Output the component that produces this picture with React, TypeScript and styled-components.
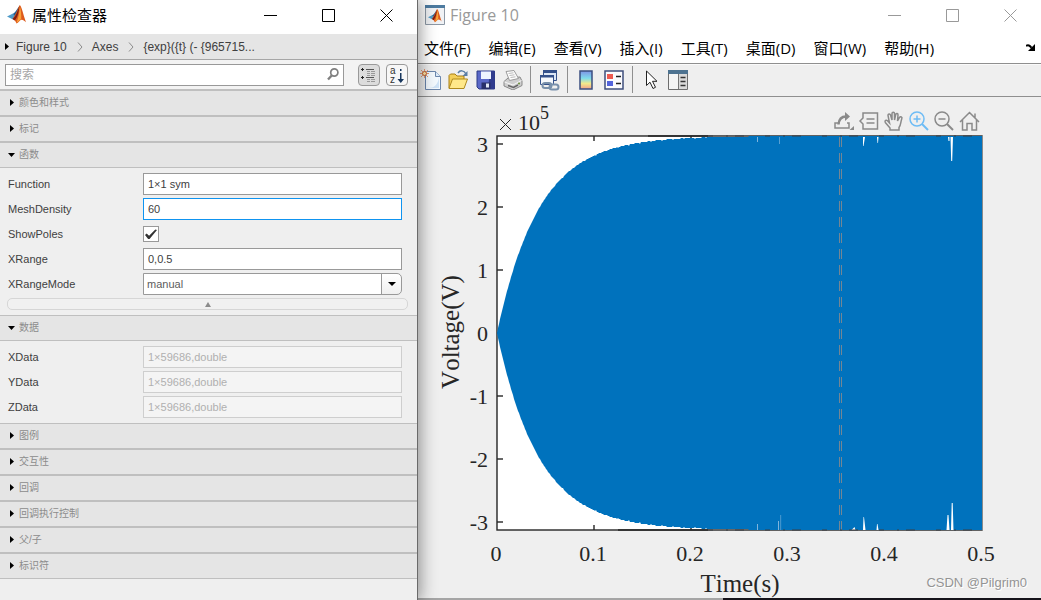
import React from 'react';
import styled, { createGlobalStyle } from 'styled-components';

const GlobalStyle = createGlobalStyle`
  * { box-sizing: border-box; }
  body { margin: 0; background: #efefef; }
  button, input, select { font: inherit; color: inherit; }
`;

const sans = `"Liberation Sans", "Noto Sans CJK SC", sans-serif`;
const uiFont = `"Open Sans", "Noto Sans CJK SC", sans-serif`;

const Desktop = styled.div`
  display: flex;
  min-height: 100vh;
`;

const Inspector = styled.aside`
  position: relative;
  z-index: 1;
  flex: 0 0 418px;
  background: #efefef;
  border-right: 1px solid #6a6a6a;
  box-shadow: 0 0 16px 2px rgba(0, 0, 0, 0.42);
  font-family: ${sans};
  font-size: 11px;
  color: #404040;
`;

const FigureWindow = styled.main`
  flex: 1;
  min-width: 0;
  display: flex;
  flex-direction: column;
  background: #efefef;
  font-family: ${uiFont};
`;

const TitleBar = styled.header<{ $inactive?: boolean }>`
  display: flex;
  align-items: center;
  height: 34px;
  padding: 0 2px 4px 7px;
  background: #fff;
  color: ${(p) => (p.$inactive ? '#999' : '#000')};
  font-family: ${uiFont};
`;

const WindowTitle = styled.h1<{ $size: number }>`
  flex: 1;
  margin: 0 0 0 5px;
  font-size: ${(p) => p.$size}px;
  line-height: 22px;
  font-weight: 400;
`;

const PlainButton = styled.button`
  display: flex;
  align-items: center;
  justify-content: center;
  padding: 0;
  border: 0;
  background: none;
`;

const WindowButton = styled(PlainButton)`
  width: 58px;
  height: 30px;
`;

const Breadcrumb = styled.nav`
  display: flex;
  align-items: center;
  height: 26px;
  padding-left: 5px;
  background: #e5e5e5;
  border-bottom: 1px solid #a6a6a6;
  font-size: 12px;
  line-height: 16px;
`;

const Crumb = styled.a`
  color: #404040;
  text-decoration: none;
  white-space: pre;
`;

const SearchBar = styled.div`
  display: flex;
  align-items: center;
  height: 31px;
  padding: 0 9px 0 5px;
  border-bottom: 2px solid #bfbfbf;
  background: #f3f3f3;
`;

const SearchBox = styled.label`
  display: flex;
  flex: 1;
  align-items: center;
  height: 22px;
  margin-right: 14px;
  padding: 0 4px;
  background: #fff;
  border: 1px solid #999;
`;

const SearchInput = styled.input`
  flex: 1;
  min-width: 0;
  padding: 0;
  border: 0;
  outline: 0;
  background: none;
  font-size: 12px;
  line-height: 16px;
  &::placeholder { color: #a6a6a6; opacity: 1; }
`;

const ModeButton = styled(PlainButton)<{ $pressed?: boolean }>`
  width: 22px;
  height: 22px;
  border: 1px solid #999;
  border-radius: 4px;
  background: ${(p) => (p.$pressed ? '#dcdcdc' : '#f7f7f7')};
  & + & { margin-left: 6px; }
`;

const SectionHeader = styled.button<{ $last?: boolean }>`
  display: flex;
  align-items: center;
  width: 100%;
  height: ${(p) => (p.$last ? 25 : 26)}px;
  padding: 0 0 1px 8px;
  border: 0;
  border-bottom: ${(p) => (p.$last ? 1 : 2)}px solid #bfbfbf;
  background: #e5e5e5;
  color: #8c8c8c;
  font-size: 10px;
  line-height: 14px;
  text-align: left;
`;

const Caret = styled.svg`
  flex: none;
  width: 7px;
  height: 7px;
  margin-right: 4px;
  fill: #000;
`;

const SectionBody = styled.div`
  display: flex;
  flex-direction: column;
  gap: 3px;
  padding: 5px 15px 5px 8px;
  border-bottom: 1px solid #bfbfbf;
`;

const PropertyRow = styled.div`
  display: flex;
  align-items: center;
  height: 22px;
`;

const PropertyLabel = styled.label`
  flex: 0 0 135px;
`;

const TextField = styled.input<{ $focus?: boolean }>`
  flex: 1;
  min-width: 0;
  height: 22px;
  padding: 0 4px;
  border: 1px solid ${(p) => (p.$focus ? '#0f94f0' : '#999')};
  border-radius: 0;
  background: #fff;
  &:disabled { border-color: #cecece; background: #f4f4f4; color: #b0b0b0; }
`;

const CheckField = styled.input`
  appearance: none;
  display: grid;
  place-items: center;
  width: 16px;
  height: 16px;
  margin: 0;
  border: 1px solid #999;
  background: #fff;
  &:checked::before {
    content: '';
    width: 12px;
    height: 10px;
    background: #333;
    clip-path: polygon(0 60%, 14% 46%, 34% 68%, 86% 4%, 100% 10%, 38% 100%, 26% 100%);
  }
`;

const SelectBox = styled.div`
  display: flex;
  flex: 1;
  height: 22px;
  border: 1px solid #999;
  border-radius: 0 5px 5px 0;
  background: linear-gradient(#fff, #f0f0f0);
  overflow: hidden;
`;

const SelectField = styled.select`
  appearance: none;
  flex: 1;
  padding: 0 3px;
  border: 0;
  border-right: 1px solid #999;
  border-radius: 0;
  background: #fff;
  color: #5c5c5c;
`;

const SelectArrow = styled.span`
  display: flex;
  align-items: center;
  justify-content: center;
  width: 19px;
`;

const CollapseBar = styled(PlainButton)`
  height: 12px;
  margin: 0 -6px 0 -1px;
  border: 1px solid #d6d6d6;
  border-radius: 5px;
  background: #f1f1f1;
`;

const MenuBar = styled.nav`
  display: flex;
  align-items: center;
  gap: 18px;
  height: 30px;
  padding: 0 5px 2px 6px;
  border-bottom: 1px solid #8f8f8f;
  background: #fff;
`;

const MenuItem = styled(PlainButton)`
  color: #000;
  font-size: 15px;
  line-height: 20px;
  white-space: nowrap;
`;

const DockButton = styled(PlainButton)`
  margin-left: auto;
`;

const ToolBar = styled.div`
  display: flex;
  align-items: center;
  height: 33px;
  padding: 0 0 2px;
  border-top: 1px solid #fafafa;
  border-bottom: 1px solid #8f8f8f;
`;

const ToolButton = styled(PlainButton)<{ $narrow?: boolean }>`
  width: ${(p) => (p.$narrow ? 26 : 28)}px;
  height: 24px;
  flex: none;
`;

const Divider = styled.span`
  width: 1px;
  height: 27px;
  margin: 0 4px;
  background: #8f8f8f;
`;

const Canvas = styled.section`
  position: relative;
  display: flex;
  flex: 1;
`;

const Chart = styled.svg`
  width: 100%;
  height: auto;
  font-family: "Liberation Serif", serif;
  font-size: 22px;
  font-kerning: none;
  fill: #262626;
`;

const AxesToolbar = styled.div`
  position: absolute;
  top: 13px;
  right: 61px;
  display: flex;
  gap: 3px;
`;

const AxesButton = styled(PlainButton)<{ $active?: boolean }>`
  width: 22px;
  height: 22px;
  color: ${(p) => (p.$active ? '#6ebcf5' : '#8a8a8a')};
`;

const Watermark = styled.p`
  position: absolute;
  right: 14px;
  bottom: 5px;
  margin: 0;
  color: #949494;
  font-family: "Liberation Sans", sans-serif;
  font-size: 13px;
  line-height: 20px;
  text-shadow: 1px 1px 0 #fff;
`;

const BottomEdge = styled.footer`
  height: 2px;
  background: linear-gradient(90deg, #a5a5a5 0 49%, #15131a 49% 100%);
`;

const WindowControls = () => (
  <>
    <WindowButton aria-label="Minimize">
      <svg width="13" height="13" stroke="currentColor"><path d="M0 6.5h13" /></svg>
    </WindowButton>
    <WindowButton aria-label="Maximize">
      <svg width="13" height="13" stroke="currentColor" fill="none"><path d="M.5.5h12v12H.5z" /></svg>
    </WindowButton>
    <WindowButton aria-label="Close">
      <svg width="13" height="13" stroke="currentColor"><path d="M.5.5l12 12M12.5.5l-12 12" /></svg>
    </WindowButton>
  </>
);

const MatlabShape = () => (
  <>
    <path d="M0 11.5 5.5 8.8 8 11.2 5.5 14.2z" fill="#4f9bc9" />
    <path d="M5.5 8.8C8 8.2 9.4 5 12.4 1L10 11.8 5.5 14.2 8 11.2z" fill="#1f5f96" />
    <path d="M12.4.5c-1.6 3-2.6 7.2-6.9 13.5 1.5.4 3 1.7 4 4.5 1.9-.5 3.4-4 5.2-3.8 1.6.2 2.5 1 4.3 2.5C17 12 15 3.4 13.6 1 13.2.2 12.8.2 12.4.5z" fill="#dd5a1c" />
    <path d="M12.4.5C11.5 4.5 9 11.5 5.5 14l2.2 1.5C11 12 12 6 12.4.5z" fill="#7e1d12" />
    <path d="M12.9 1.5c-.5 6-1.5 11-3.4 16.500 1.9-.8 3.100-3.500 4.700-3.700C14.5 10 14 5 12.9 1.5z" fill="#f9a13a" />
  </>
);

const RightCaret = () => (
  <Caret viewBox="0 0 7 7"><path d="M2 0v7l4-3.5z" /></Caret>
);
const DownCaret = () => (
  <Caret viewBox="0 0 7 7"><path d="M0 2h7L3.5 6z" /></Caret>
);

const CrumbArrow = styled.svg`
  width: 6px;
  height: 10px;
  margin: 0 9px 0 10px;
  fill: none;
  stroke: #8c8c8c;
`;

const sectionsBefore = ['颜色和样式', '标记'];
const sectionsAfter = ['图例', '交互性', '回调', '回调执行控制', '父/子', '标识符'];
const dataRows = ['XData', 'YData', 'ZData'];
const menus = ['文件(F)', '编辑(E)', '查看(V)', '插入(I)', '工具(T)', '桌面(D)', '窗口(W)', '帮助(H)'];

// Plot geometry in chart units.
const AX = { left: 79, right: 564, top: 39, bottom: 433, zero: 236 };
const UNIT = 63;
const TAU = 42;

function envelope(): string {
  const span = AX.right - AX.left;
  const upper: string[] = [];
  const lower: string[] = [];
  for (let i = 0; i <= span; i += 1) {
    const ripple = i > 60 && i < 220 && (i * 7) % 11 === 0 ? 1 : 0;
    const h = Math.round(197 * (1 - Math.exp(-i / TAU))) - ripple;
    upper.push(`${AX.left + i} ${AX.zero - h}`);
    lower.unshift(`${AX.left + i} ${AX.zero + h}`);
  }
  return `M${upper.join('L')}L${lower.join('L')}z`;
}

const Plot = () => (
  <Chart viewBox="0 0 623 501" role="img" aria-label="Voltage over time">
    <rect x={AX.left} y={AX.top} width={AX.right - AX.left} height={AX.bottom - AX.top} fill="#fff" />
    <g stroke="#262626" strokeWidth="1.4" fill="none">
      <rect x={AX.left} y={AX.top} width={AX.right - AX.left} height={AX.bottom - AX.top} />
      {[3, 2, 1, 0, -1, -2, -3].map((v) => (
        <path key={v} d={`M${AX.left} ${AX.zero - v * UNIT}h6`} />
      ))}
      {[1, 2].map((v) => (
        <path key={v} d={`M${AX.left + v * 97} ${AX.top}v5M${AX.left + v * 97} ${AX.bottom}v-5`} />
      ))}
    </g>
    <path d={envelope()} fill="#0072bd" />
    <g fill="#fff">
      <path d="M445 40h2l-1.5 9h-.5zM459 40h1.5l-.5 6h-.5zM530 40h1.5v4h-1zM532.500 40h2.500l-.8 24h-1z" />
      <path d="M445 433h2.5l-1.5-13h-.5zM458.5 433h2l-1-6h-.5zM433.5 433h4l-1-3zM528.5 433h3l-1-15h-1zM533 433h2.5l-.8-27h-1z" />
    </g>
    <g fill="#7fb4dc">
      <path d="M339 40h1v5h-1zM361 40h.7v7h-.7zM339 427h1v6h-1zM360 424h1v9h-1zM362.5 418h.6v15h-.6z" />
    </g>
    <path d="M421.5 39V433M423.5 39V433" stroke="#748694" strokeWidth="1" strokeDasharray="10 6" strokeDashoffset="-1" />
    <path d="M200 433H290M230 39H290" stroke="#262626" strokeWidth="1.4" />
    <path d="M290 433H564M290 39H564" stroke="#3b3f44" strokeWidth="1" strokeDasharray="5 13 2 7 9 21" />
    <path d="M564.5 39V433" stroke="#8a8a8a" strokeWidth="1" />

    <path d="M82 22l11 11M93 22l-11 11" stroke="#262626" />
    <text x="100" y="33">10</text>
    <text x="122" y="22" fontSize="18">5</text>
    <g textAnchor="end">
      {[3, 2, 1, 0, -1, -2, -3].map((v) => (
        <text key={v} x="70" y={AX.zero - v * UNIT + 8}>{v}</text>
      ))}
    </g>
    <g textAnchor="middle">
      {[0, 0.1, 0.2, 0.3, 0.4, 0.5].map((v, i) => (
        <text key={v} x={AX.left + i * 97 - 1} y="464">{v}</text>
      ))}
      <text x="322" y="495" fontSize="25">Time(s)</text>
      <text transform="translate(41 235) rotate(-90)" fontSize="25">Voltage(V)</text>
    </g>
  </Chart>
);

const ToolIcons = () => (
  <ToolBar>
    <ToolButton $narrow aria-label="New figure">
      <svg width="22" height="22" viewBox="0 0 22 22">
        <path d="M5.5 2.5h10l5 5v13h-15z" fill="#f4faff" stroke="#6c87ad" />
        <path d="M19 8v11H8c6 0 10-3 11-11z" fill="#cfe3f7" />
        <path d="M15.5 2.5v5h5" fill="#dcebfa" stroke="#6c87ad" />
        <path d="M4.5 0v9M0 4.5h9M1 1l7 7M8 1L1 8" stroke="#e39a78" />
        <circle cx="4.5" cy="4.5" r="2" fill="#ffe7a8" stroke="#c85f2e" />
      </svg>
    </ToolButton>
    <ToolButton aria-label="Open">
      <svg width="22" height="22" viewBox="0 0 22 22">
        <path d="M2 19V6.5L3.5 5H8l2 2h7v3" fill="#f3cf5a" stroke="#a97f14" />
        <path d="M2 19.5 5.5 10h15L17 19.5z" fill="#ffe88a" stroke="#b08a1d" />
        <path d="M11 4c2-3 6-3 8 1" fill="none" stroke="#5a7ea5" strokeWidth="1.5" />
        <path d="M20.5 2v5h-5z" fill="#5a7ea5" />
      </svg>
    </ToolButton>
    <ToolButton aria-label="Save">
      <svg width="20" height="20" viewBox="0 0 20 20">
        <path d="M1 1h17.5v18H3l-2-2z" fill="#5a68c8" stroke="#2d3a86" />
        <path d="M14 1h4.5v18H12z" fill="#303c8e" />
        <path d="M5 1.5h10V9H5z" fill="#eef4ff" />
        <path d="M5.5 12.5h9V19h-9z" fill="#28306b" />
        <path d="M10 13.5h3v4h-3z" fill="#dfe6f6" />
      </svg>
    </ToolButton>
    <ToolButton $narrow aria-label="Print">
      <svg width="20" height="20" viewBox="0 0 20 20">
        <path d="M1 11.5 5 8l12-1 2 4v4.500l-9 4.500-9-4z" fill="#cfcfcf" stroke="#8a8a8a" />
        <path d="M3 1.500 11 .5 15.500 8.500 6.500 10.500z" fill="#fdfdfd" stroke="#9a9a9a" />
        <path d="M1.500 12l8.500 3 8.500-4.500" fill="none" stroke="#f6f6f6" />
        <path d="M5 15.500l5.500 2 4.500-2.500" stroke="#666" fill="none" strokeWidth="1.5" />
        <path d="M5.5 3.500l5-.7M6.500 5.500l5-.7M7.500 7.500l5-.7" stroke="#bbb" />
        <circle cx="16" cy="13.5" r="1" fill="#6a8f3a" />
      </svg>
    </ToolButton>
    <Divider />
    <ToolButton aria-label="Link plot">
      <svg width="22" height="22" viewBox="0 0 22 22">
        <path d="M5.5 1.5h13v10h-13z" fill="#dbe6f5" stroke="#33508a" /><path d="M5 1h14v3H5z" fill="#33508a" />
        <path d="M2.5 6.5h13v9h-13z" fill="#f5f8fc" stroke="#33508a" /><path d="M2 6h14v2.5H2z" fill="#33508a" />
        <rect x="4.5" y="14" width="9" height="5" rx="2.5" fill="none" stroke="#7890ab" strokeWidth="2" />
        <rect x="11.5" y="15.5" width="9" height="5" rx="2.5" fill="none" stroke="#7890ab" strokeWidth="2" />
      </svg>
    </ToolButton>
    <Divider />
    <ToolButton aria-label="Insert colorbar">
      <svg width="14" height="20" viewBox="0 0 14 20">
        <defs>
          <linearGradient id="spectrum" x1="0" y1="0" x2="0" y2="1">
            <stop offset="0" stopColor="#7f93e6" /><stop offset=".4" stopColor="#7edcec" />
            <stop offset=".7" stopColor="#f4e98a" /><stop offset="1" stopColor="#f2a08a" />
          </linearGradient>
        </defs>
        <path d="M1 1h12v18H1z" fill="url(#spectrum)" stroke="#3b4f80" strokeWidth="1.5" />
      </svg>
    </ToolButton>
    <ToolButton aria-label="Insert legend">
      <svg width="20" height="20" viewBox="0 0 20 20">
        <path d="M1 1h18v18H1z" fill="#fbfbfd" stroke="#3f4f7c" strokeWidth="1.5" />
        <path d="M3 4h6v5H3z" fill="#ee5a50" /><path d="M3 11h6v5H3z" fill="#5263dc" />
        <path d="M12 6.5h5M12 13.5h5" stroke="#222" strokeWidth="1.5" />
      </svg>
    </ToolButton>
    <Divider />
    <ToolButton aria-label="Edit plot">
      <svg width="14" height="20" viewBox="0 0 14 20">
        <path d="M2.5 1v14.5l3.5-3.300 3 6.300 2.500-1.200-3-6h4.500z" fill="#fff" stroke="#222" />
      </svg>
    </ToolButton>
    <ToolButton $narrow aria-label="Property inspector">
      <svg width="20" height="20" viewBox="0 0 20 20">
        <path d="M.5.5h19v19H.5z" fill="#f4f4f4" stroke="#6d6d6d" />
        <path d="M0 0h20v4H0z" fill="#4d7290" /><path d="M11 4h8v15h-8z" fill="#d9d9d9" />
        <path d="M10.5 4v15" stroke="#777" />
        <path d="M12.5 7.5h5M12.5 11.5h5M12.5 15.5h5" stroke="#333" strokeWidth="1.3" />
      </svg>
    </ToolButton>
  </ToolBar>
);

const AxesTools = () => {
  const line = { width: 22, height: 22, viewBox: '0 0 22 22', fill: 'none', stroke: 'currentColor', strokeWidth: 1.5 };
  return (
    <AxesToolbar>
      <AxesButton aria-label="Export">
        <svg {...line}>
          <path d="M5 13H2v5h14v-5h-2" />
          <path d="M5.5 14.500C6 9 9 6.500 13 6.500" strokeWidth="2.5" />
          <path d="M12 2l5 4.500-5 4.500zM21 16v4h-4.500z" fill="currentColor" stroke="none" />
        </svg>
      </AxesButton>
      <AxesButton aria-label="Data tips">
        <svg {...line}><path d="M5 3h14.500v16H5v-5l-3-3 3-3zM8.500 9h8M8.500 13h8" /></svg>
      </AxesButton>
      <AxesButton aria-label="Pan">
        <svg {...line}>
          <path d="M7 20v-2L2.300 12.500c-1-1.800 1-3 2.200-1.700L6.500 13 5 5.500c-.2-1.800 2-2.200 2.500-.5l1.500 5V3.500c0-1.800 2.500-1.800 2.500 0V10l1.200-5.500c.4-1.700 2.600-1.200 2.300.5L14.500 11l2-3.500c1-1.500 3-.5 2.300 1.200C17.500 12 18 15 16 17.500V20z" />
        </svg>
      </AxesButton>
      <AxesButton $active aria-label="Zoom in">
        <svg {...line}><circle cx="9" cy="9" r="7" /><path d="M14 14l6 6" strokeWidth="2" /><path d="M5.5 9h7M9 5.500v7" /></svg>
      </AxesButton>
      <AxesButton aria-label="Zoom out">
        <svg {...line}><circle cx="9" cy="9" r="7" /><path d="M14 14l6 6" strokeWidth="2" /><path d="M5.5 9h7" /></svg>
      </AxesButton>
      <AxesButton aria-label="Restore view">
        <svg {...line}><path d="M2 12l9.500-9.500L21 12M4.500 10v10h4.500v-6.500h5V20h4.500V10M17 3.500v4" /></svg>
      </AxesButton>
    </AxesToolbar>
  );
};

const SortGlyph = styled.svg`
  overflow: visible;
  font-family: "Liberation Sans", sans-serif;
  font-size: 10px;
  fill: #333;
`;

export default function App() {
  return (
    <>
      <GlobalStyle />
      <Desktop>
        <Inspector>
          <TitleBar>
            <svg width="20" height="20" viewBox="0 0 20 20"><MatlabShape /></svg>
            <WindowTitle $size={15}>属性检查器</WindowTitle>
            <WindowControls />
          </TitleBar>
          <Breadcrumb>
            <Caret viewBox="0 0 7 7"><path d="M0 0v7l4-3.5z" /></Caret>
            <Crumb href="#figure">Figure 10</Crumb>
            <CrumbArrow viewBox="0 0 6 10"><path d="M1 .5l4 4.500-4 4.500" /></CrumbArrow>
            <Crumb href="#axes">Axes</Crumb>
            <CrumbArrow viewBox="0 0 6 10"><path d="M1 .5l4 4.500-4 4.500" /></CrumbArrow>
            <Crumb href="#line">{'{exp}({t} (- {965715...'}</Crumb>
          </Breadcrumb>
          <SearchBar>
            <SearchBox>
              <SearchInput placeholder="搜索" aria-label="搜索" />
              <svg width="12" height="13" viewBox="0 0 12 13" fill="none" stroke="#808080">
                <circle cx="7.3" cy="4.5" r="3.6" strokeWidth="1.7" />
                <path d="M4.7 7.5L1 11.500" strokeWidth="2.4" />
              </svg>
            </SearchBox>
            <ModeButton $pressed aria-label="Group properties">
              <svg width="16" height="16" viewBox="0 0 16 16" stroke="#555">
                <path d="M0 2.500h3M1.500 1v3M0 10.500h3M1.500 9v3" stroke="#222" />
                <path d="M5 2.500h8M5 10.500h8" />
                <path d="M6 4.500h3M10 4.500h4M6 6.500h3M10 6.500h4M6 8.500h3M10 8.500h4M6 12.500h3M10 12.500h4M6 14.500h3M10 14.500h4" stroke="#999" />
              </svg>
            </ModeButton>
            <ModeButton aria-label="Sort alphabetically">
              <SortGlyph width="18" height="20" viewBox="0 0 18 20">
                <text x="2" y="9">a</text>
                <text x="2" y="18">z</text>
                <path d="M12 4h1.5v2H12zM12 8h1.5v6h2.500l-3.200 4-3.300-4H12z" fill="#17365d" />
              </SortGlyph>
            </ModeButton>
          </SearchBar>

          {sectionsBefore.map((name) => (
            <SectionHeader key={name}><RightCaret />{name}</SectionHeader>
          ))}

          <SectionHeader $last><DownCaret />函数</SectionHeader>
          <SectionBody>
            <PropertyRow>
              <PropertyLabel htmlFor="fn">Function</PropertyLabel>
              <TextField id="fn" defaultValue="1×1 sym" />
            </PropertyRow>
            <PropertyRow>
              <PropertyLabel htmlFor="mesh">MeshDensity</PropertyLabel>
              <TextField id="mesh" $focus defaultValue="60" />
            </PropertyRow>
            <PropertyRow>
              <PropertyLabel htmlFor="poles">ShowPoles</PropertyLabel>
              <CheckField id="poles" type="checkbox" defaultChecked />
            </PropertyRow>
            <PropertyRow>
              <PropertyLabel htmlFor="range">XRange</PropertyLabel>
              <TextField id="range" defaultValue="0,0.5" />
            </PropertyRow>
            <PropertyRow>
              <PropertyLabel htmlFor="mode">XRangeMode</PropertyLabel>
              <SelectBox>
                <SelectField id="mode" defaultValue="manual">
                  <option>manual</option>
                  <option>auto</option>
                </SelectField>
                <SelectArrow><svg width="8" height="4"><path d="M0 0h8L4 4z" /></svg></SelectArrow>
              </SelectBox>
            </PropertyRow>
            <CollapseBar aria-label="Collapse">
              <svg width="6" height="5" fill="#8c8c8c"><path d="M0 5h6L3 0z" /></svg>
            </CollapseBar>
          </SectionBody>

          <SectionHeader $last><DownCaret />数据</SectionHeader>
          <SectionBody>
            {dataRows.map((name) => (
              <PropertyRow key={name}>
                <PropertyLabel htmlFor={name}>{name}</PropertyLabel>
                <TextField id={name} disabled defaultValue="1×59686,double" />
              </PropertyRow>
            ))}
          </SectionBody>

          {sectionsAfter.map((name, i) => (
            <SectionHeader key={name} $last={i === sectionsAfter.length - 1}><RightCaret />{name}</SectionHeader>
          ))}
        </Inspector>

        <FigureWindow>
          <TitleBar $inactive>
            <svg width="20" height="20" viewBox="0 0 20 20">
              <path d="M.5.5h19v19H.5z" fill="#f0f2f5" stroke="#8d99a6" />
              <path d="M0 0h20v3H0z" fill="#4d7ba0" />
              <g transform="translate(3 4) scale(.72)"><MatlabShape /></g>
            </svg>
            <WindowTitle $size={16}>Figure 10</WindowTitle>
            <WindowControls />
          </TitleBar>
          <MenuBar>
            {menus.map((name) => <MenuItem key={name}>{name}</MenuItem>)}
            <DockButton aria-label="Dock figure">
              <svg width="10" height="8" viewBox="0 0 10 8">
                <path d="M0 2c2-1.500 4-.5 5.500 1.700" fill="none" stroke="#000" strokeWidth="2" />
                <path d="M9 0v7H2z" />
              </svg>
            </DockButton>
          </MenuBar>
          <ToolIcons />
          <Canvas>
            <Plot />
            <AxesTools />
            <Watermark>CSDN @Pilgrim0</Watermark>
          </Canvas>
          <BottomEdge />
        </FigureWindow>
      </Desktop>
    </>
  );
}
